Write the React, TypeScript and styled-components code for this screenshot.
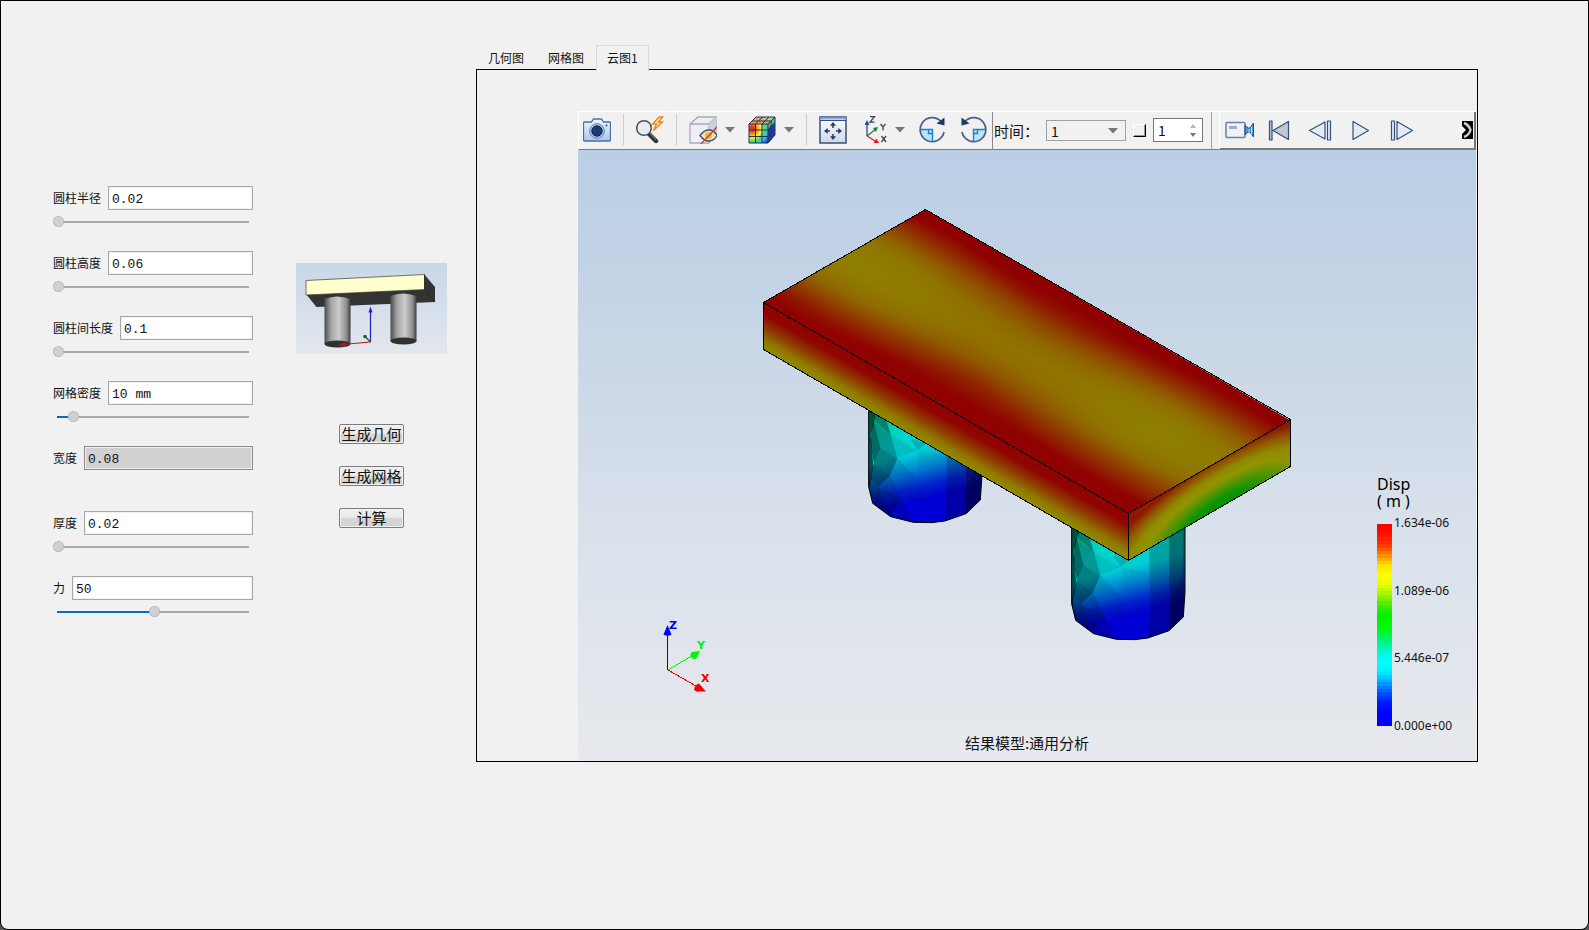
import React, { useState } from "react";
import styled, { createGlobalStyle, css } from "styled-components";

const cjk = `"Noto Sans CJK SC", "Noto Sans", sans-serif`;
const mono = `"Liberation Mono", "Noto Sans CJK SC", monospace`;

const Global = createGlobalStyle`
  * { box-sizing: border-box; }
  body { margin: 0; background: #555; font-family: ${cjk}; color: #111; }
  button, input, select { font: inherit; color: inherit; margin: 0; }
  svg { display: block; }
`;

const Page = styled.main`
  display: flex;
  align-items: flex-start;
  min-height: 100vh;
  padding: 44px 110px 44px 52px;
  border: 1px solid #000;
  border-radius: 0 0 8px 8px;
  background: #f1f1f1;
`;

/* ---------- parameter form ---------- */

const Params = styled.form`
  flex: none;
  width: 200px;
  padding-top: 141px;
`;

const Param = styled.div`
  height: 65px;
`;

const FieldRow = styled.div`
  display: flex;
  align-items: center;
  gap: 7px;
  height: 24px;
`;

const FieldLabel = styled.label`
  flex: none;
  font-size: 12px;
  line-height: 24px;
`;

const Field = styled.input`
  flex: 1;
  min-width: 0;
  height: 24px;
  padding: 2px 3px 0;
  border: 1px solid #a8a8a8;
  background: #fff;
  box-shadow: inset 0 0 0 1px #f1f1f1;
  font-family: ${mono};
  font-size: 13px;
  outline: none;
  &:read-only {
    border-color: #8a8a8a;
    background: #d1d1d1;
  }
`;

const Slider = styled.input<{ $fill: number }>`
  appearance: none;
  display: block;
  width: 100%;
  height: 12px;
  margin-top: 6px;
  background: none;
  outline: none;
  &::-webkit-slider-runnable-track {
    height: 12px;
    background:
      linear-gradient(to right, #0a6ac4 ${(p) => p.$fill}%, #a9a9a9 ${(p) => p.$fill}%)
      center / calc(100% - 8px) 2px no-repeat;
  }
  &::-webkit-slider-thumb {
    appearance: none;
    width: 11px;
    height: 11px;
    border: 1px dotted #a0a0a0;
    border-radius: 50%;
    background: #d0d0d0;
  }
`;

/* ---------- preview and actions ---------- */

const Actions = styled.section`
  flex: none;
  display: flex;
  flex-direction: column;
  align-items: center;
  width: 151px;
  margin: 0 29px 0 43px;
  padding-top: 218px;
`;

const ButtonStack = styled.div`
  display: flex;
  flex-direction: column;
  gap: 22px;
  margin-top: 70px;
`;

const PushButton = styled.button`
  width: 65px;
  height: 20px;
  padding: 0;
  border: 1px solid #7c7c7c;
  border-radius: 2px;
  background: linear-gradient(#efefef 0, #e9e9e9 50%, #d6d6d6 50%, #d2d2d2 100%);
  box-shadow: inset 0 0 0 1px #f3f3f3;
  font-size: 15px;
  line-height: 18px;
  white-space: nowrap;
`;

/* ---------- tabs and viewer ---------- */

const Viewer = styled.section`
  flex: 1;
  min-width: 0;
`;

const TabBar = styled.div`
  display: flex;
  height: 25px;
`;

const Tab = styled.button<{ $active?: boolean }>`
  position: relative;
  height: 25px;
  padding: 0 11px;
  border: 1px solid transparent;
  border-bottom: 0;
  background: none;
  font-size: 12px;
  line-height: 24px;
  ${(p) =>
    p.$active &&
    css`
      height: 26px;
      padding: 0 10px 2px;
      border-color: #d9d9d9;
      background: #f1f1f1;
      line-height: 23px;
    `}
`;

const Panel = styled.div`
  margin-top: -1px;
  padding: 41px 1px 0 101px;
  border: 1px solid #000;
`;

const Toolbar = styled.div`
  display: flex;
  height: 39px;
  border-top: 1px solid #fff;
`;

const ToolGroup = styled.div`
  display: flex;
  align-items: center;
  padding: 0 5px 2px 4px;
  border-left: 1px solid #fff;
  border-bottom: 1px solid #7a7a7a;
`;

const TimeGroup = styled(ToolGroup)`
  gap: 7px;
  padding: 0 8px 1px 1px;
  border-left-color: #8a8a8a;
  border-right: 1px solid #a0a0a0;
  font-size: 15px;
`;

const Spacer = styled.div`
  width: 7px;
  border-bottom: 1px solid #7a7a7a;
`;

const PlayGroup = styled(ToolGroup)`
  flex: 1;
  min-width: 0;
  padding: 0 1px 0 0;
  border-right: 2px solid #777;
  border-bottom-width: 2px;
`;

const Divider = styled.span`
  width: 1px;
  height: 31px;
  margin: 0 12px;
  background: #cdcdcd;
`;

const ToolButton = styled.button<{ $width?: number; $before?: number }>`
  display: flex;
  flex: none;
  align-items: center;
  justify-content: center;
  width: ${(p) => p.$width ?? 28}px;
  height: 30px;
  margin-left: ${(p) => p.$before ?? 0}px;
  padding: 0;
  border: 0;
  background: none;
`;

const Overflow = styled(ToolButton)`
  margin-left: auto;
`;

const SelectBox = styled.div`
  position: relative;
  width: 80px;
  height: 21px;
`;

const TimeSelect = styled.select`
  appearance: none;
  width: 100%;
  height: 100%;
  padding: 0 4px;
  border: 1px solid #a0a0a0;
  border-radius: 0;
  background: #f1f1f1;
  font-size: 14px;
  line-height: 18px;
`;

const SelectArrow = styled.span`
  position: absolute;
  top: 8px;
  right: 8px;
  pointer-events: none;
`;

const Check = styled.input`
  appearance: none;
  width: 13px;
  height: 13px;
  border: 1px solid #fff;
  border-right-color: #000;
  border-bottom-color: #000;
  background: #f1f1f1;
  box-shadow: inset -1px -1px 0 #999;
`;

const Spin = styled.div`
  display: flex;
  width: 50px;
  height: 24px;
  border: 1px solid #777;
  background: #fff;
`;

const SpinInput = styled.input`
  flex: 1;
  min-width: 0;
  padding: 0 4px;
  border: 0;
  background: none;
  outline: none;
  font-size: 14px;
`;

const SpinButtons = styled.div`
  display: flex;
  flex-direction: column;
  justify-content: center;
  gap: 5px;
  width: 18px;
`;

const SpinButton = styled.button`
  height: 4px;
  padding: 0 6px;
  border: 0;
  background: none;
`;

const Scene = styled.div`
  position: relative;
  background: linear-gradient(#bacee6 0%, #c4d3e5 22%, #d9e1eb 62%, #e7e9ed 100%);
`;

const Legend = styled.div`
  position: absolute;
  right: 20px;
  bottom: 28px;
  width: 79px;
`;

const LegendTitle = styled.div`
  font-family: "Noto Sans", sans-serif;
  font-size: 16px;
  line-height: 17px;
  color: #000;
`;

const LegendBody = styled.div`
  display: flex;
  gap: 2px;
  margin-top: 6px;
`;

const LegendBar = styled.div<{ $colors: string }>`
  width: 15px;
  height: 202px;
  margin-top: 8px;
  background: linear-gradient(${(p) => p.$colors});
`;

const LegendScale = styled.div`
  display: flex;
  flex-direction: column;
  justify-content: space-between;
  height: 217px;
  font-family: "Noto Sans", sans-serif;
  font-size: 12px;
  line-height: 14px;
`;

const Caption = styled.div`
  position: absolute;
  left: 0;
  right: 0;
  bottom: 8px;
  font-size: 15px;
  line-height: 20px;
  text-align: center;
`;

/* ---------- data ---------- */

type ParamDef = { id: string; label: string; value: string; pos?: number };

const params: ParamDef[] = [
  { id: "radius", label: "圆柱半径", value: "0.02", pos: 0 },
  { id: "height", label: "圆柱高度", value: "0.06", pos: 0 },
  { id: "span", label: "圆柱间长度", value: "0.1", pos: 0 },
  { id: "mesh", label: "网格密度", value: "10 mm", pos: 8 },
  { id: "width", label: "宽度", value: "0.08" },
  { id: "thick", label: "厚度", value: "0.02", pos: 0 },
  { id: "force", label: "力", value: "50", pos: 51 },
];

const rainbow: [number, number, number][] = [
  [255, 0, 0],
  [255, 22, 0],
  [255, 60, 0],
  [255, 140, 0],
  [255, 225, 0],
  [255, 255, 0],
  [225, 255, 0],
  [150, 245, 0],
  [70, 235, 0],
  [0, 240, 0],
  [0, 250, 0],
  [0, 245, 60],
  [0, 245, 160],
  [0, 250, 235],
  [0, 255, 255],
  [0, 225, 255],
  [0, 145, 255],
  [0, 70, 255],
  [0, 20, 255],
  [0, 0, 255],
  [0, 0, 255],
];

const bands = 60;
const legendColors = Array.from({ length: bands }, (_, i) => {
  const t = (i / (bands - 1)) * (rainbow.length - 1);
  const k = Math.min(Math.floor(t), rainbow.length - 2);
  const rgb = rainbow[k].map((c, j) => Math.round(c + (rainbow[k + 1][j] - c) * (t - k)));
  return `rgb(${rgb.join(",")}) ${(i * 100) / bands}% ${((i + 1) * 100) / bands}%`;
}).join(", ");

/* ---------- icons ---------- */

const navy = "#34507f";

const DropArrow = () => (
  <svg width="10" height="6" viewBox="0 0 10 6">
    <path d="M0 0h10L5 5.5z" fill="#777" />
  </svg>
);

const CameraIcon = () => (
  <svg width="28" height="24" viewBox="0 0 28 24">
    <defs>
      <linearGradient id="cam" x2="0" y2="1">
        <stop stopColor="#f2f8ff" />
        <stop offset="1" stopColor="#a9c6ea" />
      </linearGradient>
    </defs>
    <path d="M1.5 4h7l2-3h8l2 3h6q1 0 1 1v17q0 1-1 1h-25q-1 0-1-1v-17q0-1 1-1z" fill="url(#cam)" stroke="#4a6da5" strokeWidth="1.3" />
    <circle cx="14" cy="13" r="7.4" fill="#a9c3e4" stroke="#6b88b5" />
    <circle cx="14" cy="13" r="5.2" fill="#1d3b6e" stroke="#0f2750" />
    <circle cx="23.5" cy="7.5" r="1.1" fill="#34507f" />
  </svg>
);

const ProbeIcon = () => (
  <svg width="28" height="28" viewBox="0 0 28 28">
    <path d="M12 17l8 8" stroke="#2f3236" strokeWidth="4.4" strokeLinecap="round" />
    <path d="M13 16l7 8" stroke="#888" strokeWidth="1" />
    <circle cx="8" cy="12" r="7.3" fill="#e9edf3" stroke="#4c4f55" strokeWidth="1.5" />
    <path d="M23 1l-6.500 7h4l-3 6.500 9-8.500h-4l4-5z" fill="#ffe2a8" stroke="#e8871e" strokeWidth="1.4" />
  </svg>
);

const HideIcon = () => (
  <svg width="28" height="28" viewBox="0 0 28 28">
    <path d="M1 8l8-7h18v17l-7 9h-19z" fill="#eef0f5" stroke="#a5abb8" strokeWidth="1.3" />
    <path d="M1 8h19v19M20 8l7-7" fill="none" stroke="#a5abb8" strokeWidth="1.3" />
    <path d="M20 8l7-7v17l-7 9z" fill="#cbd0da" />
    <path d="M11 19.500q4-5.500 9-5.500t8 5.500q-3 5.500-8 5.500t-9-5.500z" fill="#f7e4a6" stroke="#37507c" strokeWidth="1.3" />
    <circle cx="19.500" cy="19.500" r="3.600" fill="#efb950" />
    <path d="M12 28L28 11" stroke="#cf3a1d" strokeWidth="1.3" />
  </svg>
);

const ContourIcon = () => (
  <svg width="28" height="28" viewBox="0 0 28 28">
    <defs>
      <radialGradient id="cube" cx="0.150" cy="0.250" r="1.050">
        <stop offset="0.100" stopColor="#e9321f" />
        <stop offset="0.300" stopColor="#f7a520" />
        <stop offset="0.460" stopColor="#f5f04a" />
        <stop offset="0.620" stopColor="#57d95a" />
        <stop offset="0.780" stopColor="#2fc7f0" />
        <stop offset="1" stopColor="#1846d0" />
      </radialGradient>
    </defs>
    <path d="M1 8l7-7h19l-7 7z" fill="#e6a27b" />
    <path d="M14 4.500h9l4-3.500h-9z" fill="#9bd7a4" />
    <path d="M20 8l7-7v18l-7 8z" fill="#1d3fb4" />
    <path d="M20 8l7-7v5l-7 7z" fill="#54b882" />
    <path d="M1 8h19v19h-19z" fill="url(#cube)" />
    <path
      d="M1 8l7-7h19v18l-7 8h-19zM1 8h19v19M20 8l7-7M7.500 8v19M14 8v19M1 14h19M1 20.500h19M7.500 8l7-7M14 8l7-7M4 5h19v19M20 14l7-7M20 20.500l7-7"
      fill="none"
      stroke="#26314e"
      strokeWidth="1"
    />
  </svg>
);

const FitIcon = () => (
  <svg width="28" height="28" viewBox="0 0 28 28">
    <defs>
      <linearGradient id="fit" x2="0" y2="1">
        <stop stopColor="#fbfcfe" />
        <stop offset="1" stopColor="#d2d8e4" />
      </linearGradient>
    </defs>
    <rect x="1" y="1" width="26" height="26" fill="url(#fit)" stroke={navy} strokeWidth="1.500" />
    <path d="M1 2.500h26" stroke="#8fa9d0" strokeWidth="2" />
    <path d="M1 4.500h26" stroke={navy} />
    <path d="M14 9v3M14 18v3M8 15h3M17 15h3" stroke="#243d6b" strokeWidth="1.500" />
    <path d="M14 6l3 3.700h-6zM14 24l3-3.700h-6zM5 15l3.700-3v6zM23 15l-3.700-3v6z" fill="#243d6b" />
  </svg>
);

const AxesIcon = () => (
  <svg width="22" height="28" viewBox="0 0 22 28">
    <path d="M2 20V8" stroke="#2447a8" strokeWidth="1.300" />
    <path d="M2 4l2.500 5h-5z" fill="#2447a8" />
    <path d="M2 20l9-7" stroke="#16823a" strokeWidth="1.300" />
    <path d="M13 11l-2 5-3-4z" fill="#16823a" />
    <path d="M2 20l9 5.500" stroke="#e02020" strokeWidth="1.300" />
    <path d="M14 27l-5.500 0 3-4.500z" fill="#e02020" />
    <path d="M5 0.700h4.500l-4.500 5.500h4.500M15.500 8l2.500 3 2.500-3M18 11v3.500M16.500 20l4.500 6M21 20l-4.500 6" fill="none" stroke="#444" strokeWidth="1.300" />
  </svg>
);

const RotateIcon = ({ ccw }: { ccw?: boolean }) => (
  <svg width="27" height="27" viewBox="0 0 27 27">
    <g transform={ccw ? "matrix(-1 0 0 1 27 0)" : undefined}>
      <path d="M2 13.500h11.500v12q-10-1-11.500-12z" fill="#b9e3f8" />
      <path d="M2 13.500h11.500v12M9.500 13.500v4h4" fill="none" stroke="#1784c7" strokeWidth="1.400" />
      <path d="M22 5.500A12 12 0 1 0 25 16" fill="none" stroke="#47608d" strokeWidth="1.700" />
      <path d="M25.500 1.500v8l-8-2z" fill="#1f3968" />
    </g>
  </svg>
);

const RecordIcon = () => (
  <svg width="29" height="18" viewBox="0 0 29 18">
    <rect x="1" y="1.500" width="19" height="15" rx="1" fill="#eef1f6" stroke="#7080a0" strokeWidth="1.500" />
    <rect x="4" y="5" width="8" height="3" fill="#a3aab8" />
    <path d="M20 4l3 3h2l3.500-5v14L25 11h-2l-3 3z" fill="#3f9bd8" stroke="#2c4f86" />
    <path d="M24 8v3M26.500 6v7" stroke="#bfe4fa" />
  </svg>
);

const PlaySvg = ({ kind }: { kind: "first" | "prev" | "play" | "next" }) => (
  <svg width="24" height="21" viewBox="0 0 24 21">
    <g fill={kind === "first" ? "#c3c8cf" : "#e6ebf3"} stroke={navy} strokeWidth="1.200" strokeLinejoin="round">
      {kind === "first" && <path d="M2.500 1h2.500v19h-2.500zM21.500 1.500v18l-15.500-9z" />}
      {kind === "prev" && <path d="M17 2v17l-15.500-8.500zM19.500 1h3v19h-3z" />}
      {kind === "play" && <path d="M4 1.500v18l15.500-9z" />}
      {kind === "next" && <path d="M7 1.500v18l15.500-9zM1.500 1h3v19h-3z" />}
    </g>
  </svg>
);

const MoreIcon = () => (
  <svg width="11" height="18" viewBox="0 0 11 18">
    <path d="M0 0h11v18H0z" fill="#000" />
    <path d="M0 5l4 4-4 4z" fill="#fff" />
    <path d="M2 2q5 2 6.500 7-1.500 5-6.500 7" fill="none" stroke="#ccc" strokeWidth="2.500" />
  </svg>
);

/* ---------- drawings ---------- */

const PreviewDrawing = () => (
  <svg width="151" height="91" viewBox="0 0 151 91" role="img" aria-label="几何预览">
    <defs>
      <linearGradient id="pbg" x2="0" y2="1">
        <stop stopColor="#c8d7e8" />
        <stop offset="1" stopColor="#e3e7ed" />
      </linearGradient>
      <linearGradient id="pcyl">
        <stop stopColor="#4a4a4a" />
        <stop offset="0.250" stopColor="#a5a5a5" />
        <stop offset="0.550" stopColor="#cbcbcb" />
        <stop offset="0.850" stopColor="#8d8d8d" />
        <stop offset="1" stopColor="#3a3a3a" />
      </linearGradient>
    </defs>
    <path d="M0 0h151v91H0z" fill="url(#pbg)" />
    <path d="M10 31l118-4.500V11l11 13v15L20.500 44z" fill="#333" />
    <path d="M10 17.500L128.500 11.500V26.500L10 32z" fill="#ffffcd" stroke="#3c3c30" strokeWidth="0.700" />
    <path d="M128.500 11.500V26.500L139 39" fill="none" stroke="#222" strokeWidth="0.700" />
    <path d="M28.500 36q12-5 26 0v45h-26z" fill="url(#pcyl)" />
    <ellipse cx="41.500" cy="81" rx="13" ry="3.500" fill="#303030" />
    <path d="M94.500 33q12-5 26 0v45h-26z" fill="url(#pcyl)" />
    <ellipse cx="107.500" cy="78" rx="13" ry="3.500" fill="#303030" />
    <path d="M74.500 79V47" stroke="#2020c0" strokeWidth="1.200" />
    <path d="M74.500 43.500l2 6h-4z" fill="#2020c0" />
    <path d="M74.500 79L46 81.500" stroke="#c01818" strokeWidth="1.200" />
    <path d="M42 82l7-2.500v4z" fill="#c01818" />
    <path d="M74.500 79l-5-5" stroke="#126020" strokeWidth="1.200" />
    <circle cx="69" cy="73.500" r="1.800" fill="#0e6a1c" />
  </svg>
);

/* each facet: outline points and how much it is darkened */
const facets: [string, number][] = [
  ["56,40 78,40 78,105 62,165 70,260 58,330 56,320", 0.6],
  ["70,118 92,205 72,250 60,185", 0.5],
  ["78,40 110,40 110,125 123,165 75,125", 0.36],
  ["72,125 123,165 142,235 92,205", 0.28],
  ["92,205 142,235 120,287 72,250", 0.38],
  ["72,250 120,287 84,320 60,300", 0.45],
  ["84,320 120,287 155,355", 0.2],
  ["58,300 84,320 122,410 68,370 56,325", 0.4],
  ["84,320 155,355 122,410", 0.3],
  ["155,355 190,427 122,410", 0.15],
  ["123,165 203,210 142,235", 0.08],
  ["142,235 205,297 120,287", 0.1],
  ["120,287 205,297 225,368 155,355", 0.08],
  ["180,175 228,190 203,210", 0.14],
  ["203,210 288,225 285,340 225,368 205,297", 0.04],
  ["288,40 348,40 348,401 285,423 290,310", 0.22],
  ["348,40 388,40 388,230 348,330", 0.45],
  ["388,40 396,40 395,285 391,360 348,401 348,330 388,230", 0.55],
];

const Pillar = ({ x, y }: { x: number; y: number }) => (
  <g transform={`translate(${x} ${y}) scale(0.3333)`}>
    <path
      d="M56 40V320L68 370L122 410L190 427L245 428L285 423L348 401L391 360L396 285V40z"
      fill="url(#pillar)"
      stroke="#000"
      strokeWidth="3"
    />
    {facets.map(([points, dark], i) => (
      <polygon key={i} points={points} fill="#000" opacity={dark} />
    ))}
  </g>
);

const SceneDrawing = () => (
  <svg width="100%" viewBox="0 0 898 611" role="img" aria-label="位移云图">
    <defs>
      <linearGradient id="top" x1="0" y1="0" x2="0" y2="1">
        <stop stopColor="#8f0000" />
        <stop offset="0.100" stopColor="#900300" />
        <stop offset="0.220" stopColor="#8f2600" />
        <stop offset="0.340" stopColor="#8f5400" />
        <stop offset="0.440" stopColor="#906c00" />
        <stop offset="0.530" stopColor="#907400" />
        <stop offset="0.640" stopColor="#8f6600" />
        <stop offset="0.760" stopColor="#8f4000" />
        <stop offset="0.860" stopColor="#901400" />
        <stop offset="0.930" stopColor="#8f0000" />
      </linearGradient>
      <radialGradient id="lobe">
        <stop stopColor="#908200" stopOpacity="0.900" />
        <stop offset="0.400" stopColor="#907c00" stopOpacity="0.650" />
        <stop offset="0.700" stopColor="#907400" stopOpacity="0.250" />
        <stop offset="1" stopColor="#907000" stopOpacity="0" />
      </radialGradient>
      <linearGradient id="front" x1="0" y1="0" x2="0" y2="1">
        <stop stopColor="#900000" />
        <stop offset="0.250" stopColor="#8f0600" />
        <stop offset="0.550" stopColor="#8f4000" />
        <stop offset="0.800" stopColor="#907800" />
        <stop offset="1" stopColor="#8f8c00" />
      </linearGradient>
      <radialGradient
        id="side"
        gradientUnits="userSpaceOnUse"
        cx="0"
        cy="0"
        r="1"
        gradientTransform="translate(0.560 1.250) scale(0.810 1.350)"
      >
        <stop stopColor="#009000" />
        <stop offset="0.320" stopColor="#0c9400" />
        <stop offset="0.480" stopColor="#5a9400" />
        <stop offset="0.600" stopColor="#909400" />
        <stop offset="0.720" stopColor="#8f8a00" />
        <stop offset="0.860" stopColor="#8f5800" />
        <stop offset="1.000" stopColor="#8f1800" />
      </radialGradient>
      <linearGradient id="pillar" gradientUnits="userSpaceOnUse" x1="165" y1="80" x2="235" y2="355">
        <stop stopColor="#00c89a" />
        <stop offset="0.300" stopColor="#00d6cc" />
        <stop offset="0.500" stopColor="#00cdd6" />
        <stop offset="0.680" stopColor="#0080d4" />
        <stop offset="0.860" stopColor="#0024d4" />
        <stop offset="1" stopColor="#0000d6" />
      </linearGradient>
      <clipPath id="topClip">
        <path d="M0 0h1v1H0z" />
      </clipPath>
    </defs>

    <Pillar x={272} y={230} />
    <Pillar x={475} y={347} />

    <g transform="matrix(365 211 162 -93 185.500 152.500)">
      <rect width="1" height="1" fill="url(#top)" />
      <g clipPath="url(#topClip)">
        <ellipse cx="0.060" cy="0.490" rx="0.460" ry="0.460" fill="url(#lobe)" />
        <ellipse cx="0.860" cy="0.520" rx="0.460" ry="0.440" fill="url(#lobe)" />
      </g>
    </g>
    <g transform="matrix(365 211 0 47 185.500 152.500)">
      <rect width="1" height="1" fill="url(#front)" />
    </g>
    <g transform="matrix(162 -94 0 47 550.500 363.500)">
      <rect width="1" height="1" fill="url(#side)" />
    </g>
    <path
      d="M347.500 59.500L712.500 269.500V316.500L550.500 410.500L185.500 199.500V152.500zM185.500 152.500L550.500 363.500L712.500 269.500M550.500 363.500V410.500"
      fill="none"
      stroke="#000"
      shapeRendering="crispEdges"
    />

    <g strokeWidth="1" shapeRendering="crispEdges">
      <path d="M89.500 520V480" stroke="#0000f5" />
      <path d="M90 520L115 505" stroke="#00f500" />
      <path d="M90 520L118 536" stroke="#f50000" />
    </g>
    <path d="M89.500 475l4 9.500q-4 2.500-8 0z" fill="#0000f5" />
    <path d="M122 501l-8 1q-3 3 0 6.500l4 .500z" fill="#00f500" />
    <path d="M128 541.500l-7-8q-4 1-5 6 2 3 5 2z" fill="#f50000" />
    <g fontFamily="DejaVu Sans, sans-serif" fontSize="11" fontWeight="bold">
      <text x="91" y="479" fill="#0000f5">Z</text>
      <text x="119" y="499" fill="#00f500">Y</text>
      <text x="123" y="532" fill="#f50000">X</text>
    </g>
  </svg>
);

/* ---------- app ---------- */

const ParamField = ({ def }: { def: ParamDef }) => {
  const [text, setText] = useState(def.value);
  const [pos, setPos] = useState(def.pos ?? 0);
  return (
    <Param>
      <FieldRow>
        <FieldLabel htmlFor={def.id}>{def.label}</FieldLabel>
        <Field id={def.id} value={text} readOnly={def.pos === undefined} onChange={(e) => setText(e.target.value)} />
      </FieldRow>
      {def.pos !== undefined && (
        <Slider
          type="range"
          min={0}
          max={100}
          aria-label={def.label}
          $fill={pos}
          value={pos}
          onChange={(e) => setPos(Number(e.target.value))}
        />
      )}
    </Param>
  );
};

const tabs = ["几何图", "网格图", "云图1"];

export default function App() {
  const [tab, setTab] = useState(2);
  const [frame, setFrame] = useState("1");
  const step = (d: number) => setFrame(String(Math.max(1, (Number(frame) || 1) + d)));

  return (
    <>
      <Global />
      <Page>
        <Params>
          {params.map((p) => (
            <ParamField key={p.id} def={p} />
          ))}
        </Params>

        <Actions>
          <PreviewDrawing />
          <ButtonStack>
            <PushButton type="button">生成几何</PushButton>
            <PushButton type="button">生成网格</PushButton>
            <PushButton type="button">计算</PushButton>
          </ButtonStack>
        </Actions>

        <Viewer>
          <TabBar role="tablist">
            {tabs.map((t, i) => (
              <Tab key={t} role="tab" aria-selected={i === tab} $active={i === tab} onClick={() => setTab(i)}>
                {t}
              </Tab>
            ))}
          </TabBar>
          <Panel>
            <Toolbar>
              <ToolGroup>
                <ToolButton aria-label="截图"><CameraIcon /></ToolButton>
                <Divider />
                <ToolButton aria-label="查询"><ProbeIcon /></ToolButton>
                <Divider />
                <ToolButton aria-label="隐藏"><HideIcon /></ToolButton>
                <ToolButton aria-label="隐藏选项" $width={10} $before={8}><DropArrow /></ToolButton>
                <ToolButton aria-label="云图" $before={13}><ContourIcon /></ToolButton>
                <ToolButton aria-label="云图选项" $width={10} $before={8}><DropArrow /></ToolButton>
                <Divider />
                <ToolButton aria-label="适应窗口"><FitIcon /></ToolButton>
                <ToolButton aria-label="视角" $width={22} $before={18}><AxesIcon /></ToolButton>
                <ToolButton aria-label="视角选项" $width={10} $before={8}><DropArrow /></ToolButton>
                <ToolButton aria-label="顺时针旋转" $before={13}><RotateIcon /></ToolButton>
                <ToolButton aria-label="逆时针旋转" $before={13}><RotateIcon ccw /></ToolButton>
              </ToolGroup>
              <TimeGroup>
                <label htmlFor="time">时间：</label>
                <SelectBox>
                  <TimeSelect id="time" defaultValue="1">
                    <option value="1">1</option>
                  </TimeSelect>
                  <SelectArrow><DropArrow /></SelectArrow>
                </SelectBox>
                <Check type="checkbox" aria-label="锁定帧" />
                <Spin>
                  <SpinInput aria-label="帧" value={frame} onChange={(e) => setFrame(e.target.value)} />
                  <SpinButtons>
                    <SpinButton aria-label="增加" onClick={() => step(1)}>
                      <svg width="6" height="4" viewBox="0 0 6 4"><path d="M0 4h6L3 0z" fill="#b5b5b5" /></svg>
                    </SpinButton>
                    <SpinButton aria-label="减少" onClick={() => step(-1)}>
                      <svg width="6" height="4" viewBox="0 0 6 4"><path d="M0 0h6L3 4z" fill="#777" /></svg>
                    </SpinButton>
                  </SpinButtons>
                </Spin>
              </TimeGroup>
              <Spacer />
              <PlayGroup>
                <ToolButton aria-label="录制" $width={38}><RecordIcon /></ToolButton>
                <ToolButton aria-label="首帧" $width={41}><PlaySvg kind="first" /></ToolButton>
                <ToolButton aria-label="上一帧" $width={41}><PlaySvg kind="prev" /></ToolButton>
                <ToolButton aria-label="播放" $width={41}><PlaySvg kind="play" /></ToolButton>
                <ToolButton aria-label="下一帧" $width={41}><PlaySvg kind="next" /></ToolButton>
                <Overflow aria-label="更多" $width={11}><MoreIcon /></Overflow>
              </PlayGroup>
            </Toolbar>
            <Scene>
              <SceneDrawing />
              <Legend>
                <LegendTitle>
                  Disp
                  <br />
                  ( m )
                </LegendTitle>
                <LegendBody>
                  <LegendBar $colors={legendColors} />
                  <LegendScale>
                    <span>1.634e-06</span>
                    <span>1.089e-06</span>
                    <span>5.446e-07</span>
                    <span>0.000e+00</span>
                  </LegendScale>
                </LegendBody>
              </Legend>
              <Caption>结果模型:通用分析</Caption>
            </Scene>
          </Panel>
        </Viewer>
      </Page>
    </>
  );
}
